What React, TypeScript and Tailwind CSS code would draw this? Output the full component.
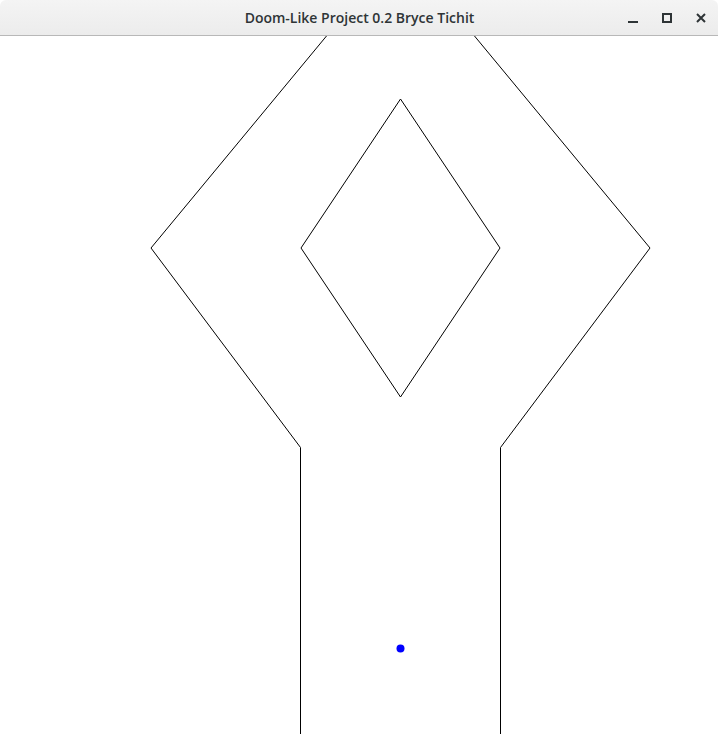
export default function App() {
  return (
    <div className="w-[718px] h-[734px] flex flex-col bg-white overflow-hidden">
      <div className="h-[36px] shrink-0 flex items-center relative bg-gradient-to-b from-[#f4f4f4] to-[#ececec] border-b border-[#b8b8b8] rounded-t-[6px]">
        <div className="flex-1 text-center text-[14px] font-semibold text-[#2e3436] pl-[1px] font-['Open_Sans',sans-serif]">
          Doom-Like Project 0.2 Bryce Tichit
        </div>
        <div className="absolute right-0 top-0 h-[35px] flex items-center">
          <button className="w-[34px] h-[35px] flex items-center justify-center">
            <svg width="12" height="12" viewBox="0 0 12 12">
              <rect x="1" y="9" width="10" height="2" fill="#2e3436" />
            </svg>
          </button>
          <button className="w-[34px] h-[35px] flex items-center justify-center">
            <svg width="12" height="12" viewBox="0 0 12 12">
              <rect x="2" y="2" width="8" height="8" fill="none" stroke="#2e3436" strokeWidth="2" />
            </svg>
          </button>
          <button className="w-[34px] h-[35px] flex items-center justify-center">
            <svg width="12" height="12" viewBox="0 0 12 12">
              <path d="M2 2 L10 10 M10 2 L2 10" stroke="#2e3436" strokeWidth="2" />
            </svg>
          </button>
        </div>
      </div>
      <div className="flex-1">
        <svg width="718" height="698" viewBox="0 36 718 698">
          <g stroke="#000" strokeWidth="1" fill="none">
            <polyline points="326.5,36 151,248 300.5,447.5 300.5,734" />
            <polyline points="474.5,36 650,248 500.5,447.5 500.5,734" />
            <polygon points="400.5,99 500,248 400.5,397 301,248" />
          </g>
          <circle cx="400.5" cy="648.5" r="4" fill="#0000ff" />
        </svg>
      </div>
    </div>
  );
}
